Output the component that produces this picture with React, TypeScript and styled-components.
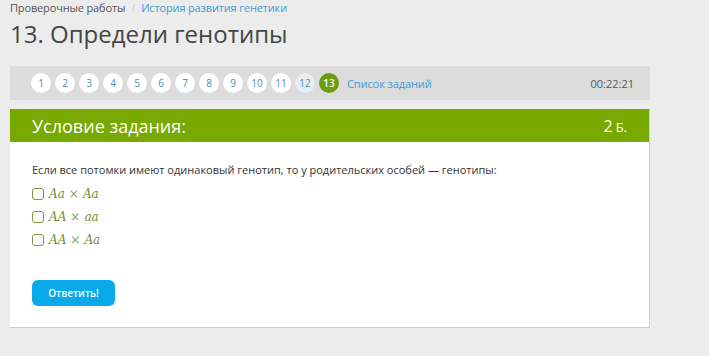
import styled, { createGlobalStyle } from 'styled-components';

const GlobalStyle = createGlobalStyle`
  html, body {
    margin: 0;
    padding: 0;
    background: #ececec;
    font-family: "Open Sans", "Noto Sans", sans-serif;
  }
`;

const Page = styled.div`
  width: 640px;
  padding: 0 10px;
`;

const Breadcrumbs = styled.div`
  display: flex;
  align-items: center;
  height: 14px;
  font-size: 11px;
  letter-spacing: -0.15px;
  color: #555;
  gap: 6px;
`;

const Separator = styled.span`
  color: #ccc;
`;

const Link = styled.a`
  color: #3d9cd4;
  text-decoration: none;
`;

const Title = styled.h1`
  margin: 5px 0 0;
  font-size: 24px;
  font-weight: 400;
  color: #454545;
  line-height: 30px;
`;

const Toolbar = styled.div`
  display: flex;
  align-items: center;
  height: 34px;
  margin-top: 17px;
  padding: 0 16px 0 21px;
  background: #dcdcdc;
`;

const Bubbles = styled.div`
  display: flex;
  gap: 4px;
`;

const Bubble = styled.span<{ $state?: 'done' | 'current' | 'normal' }>`
  display: flex;
  align-items: center;
  justify-content: center;
  width: 20px;
  height: 20px;
  border-radius: 50%;
  font-size: 10px;
  background: ${({ $state }) =>
    $state === 'current' ? '#6b9d0c' : $state === 'done' ? '#e9edf0' : '#fff'};
  color: ${({ $state }) => ($state === 'current' ? '#fff' : '#4a8fb8')};
  font-weight: ${({ $state }) => ($state === 'current' ? 600 : 400)};
`;

const TaskList = styled(Link)`
  font-size: 11px;
  letter-spacing: -0.1px;
  margin-left: 8px;
`;

const Timer = styled.span`
  margin-left: auto;
  font-size: 11px;
  color: #555;
`;

const Card = styled.div`
  margin-top: 9px;
  background: #fff;
  border-right: 1px solid #cfcfcf;
  border-bottom: 1px solid #cfcfcf;
`;

const CardHeader = styled.div`
  display: flex;
  align-items: center;
  justify-content: space-between;
  height: 33px;
  padding: 0 22px;
  background: #77a900;
  color: #fff;
`;

const HeaderTitle = styled.span`
  font-size: 18px;
`;

const Points = styled.span`
  font-size: 16px;
  span {
    font-size: 13px;
    margin-left: 3px;
  }
`;

const CardBody = styled.div`
  padding: 20px 22px 21px;
`;

const Question = styled.p`
  margin: 0 0 8px;
  font-size: 11px;
  color: #333;
  line-height: 16px;
`;

const Options = styled.div`
  display: flex;
  flex-direction: column;
  gap: 7px;
`;

const Option = styled.label`
  display: flex;
  align-items: center;
  gap: 5px;
  height: 16px;
`;

const Box = styled.span`
  width: 10px;
  height: 10px;
  border: 1.5px solid #7b9a3e;
  border-radius: 3px;
`;

const Math = styled.span`
  font-family: "DejaVu Serif", "Liberation Serif", serif;
  font-style: italic;
  font-size: 12px;
  color: #6f8f2e;
  i {
    font-style: normal;
    color: #8aa45a;
    margin: 0 4px;
  }
`;

const Button = styled.button`
  margin-top: 32px;
  width: 83px;
  height: 26px;
  border: none;
  border-radius: 6px;
  background: #0aa9e9;
  color: #fff;
  font-family: "Open Sans", "Noto Sans", sans-serif;
  font-size: 10px;
  font-weight: 600;
`;

const options = [
  ['Aa', 'Aa'],
  ['AA', 'aa'],
  ['AA', 'Aa'],
];

export default function App() {
  return (
    <Page>
      <GlobalStyle />
      <Breadcrumbs>
        <span>Проверочные работы</span>
        <Separator>/</Separator>
        <Link href="#">История развития генетики</Link>
      </Breadcrumbs>
      <Title>13. Определи генотипы</Title>
      <Toolbar>
        <Bubbles>
          {Array.from({ length: 13 }, (_, i) => (
            <Bubble key={i} $state={i === 12 ? 'current' : i === 11 ? 'done' : 'normal'}>
              {i + 1}
            </Bubble>
          ))}
        </Bubbles>
        <TaskList href="#">Список заданий</TaskList>
        <Timer>00:22:21</Timer>
      </Toolbar>
      <Card>
        <CardHeader>
          <HeaderTitle>Условие задания:</HeaderTitle>
          <Points>
            2<span>Б.</span>
          </Points>
        </CardHeader>
        <CardBody>
          <Question>
            Если все потомки имеют одинаковый генотип, то у родительских особей — генотипы:
          </Question>
          <Options>
            {options.map(([a, b]) => (
              <Option key={a + b}>
                <Box />
                <Math>
                  {a}
                  <i>×</i>
                  {b}
                </Math>
              </Option>
            ))}
          </Options>
          <Button>Ответить!</Button>
        </CardBody>
      </Card>
    </Page>
  );
}
